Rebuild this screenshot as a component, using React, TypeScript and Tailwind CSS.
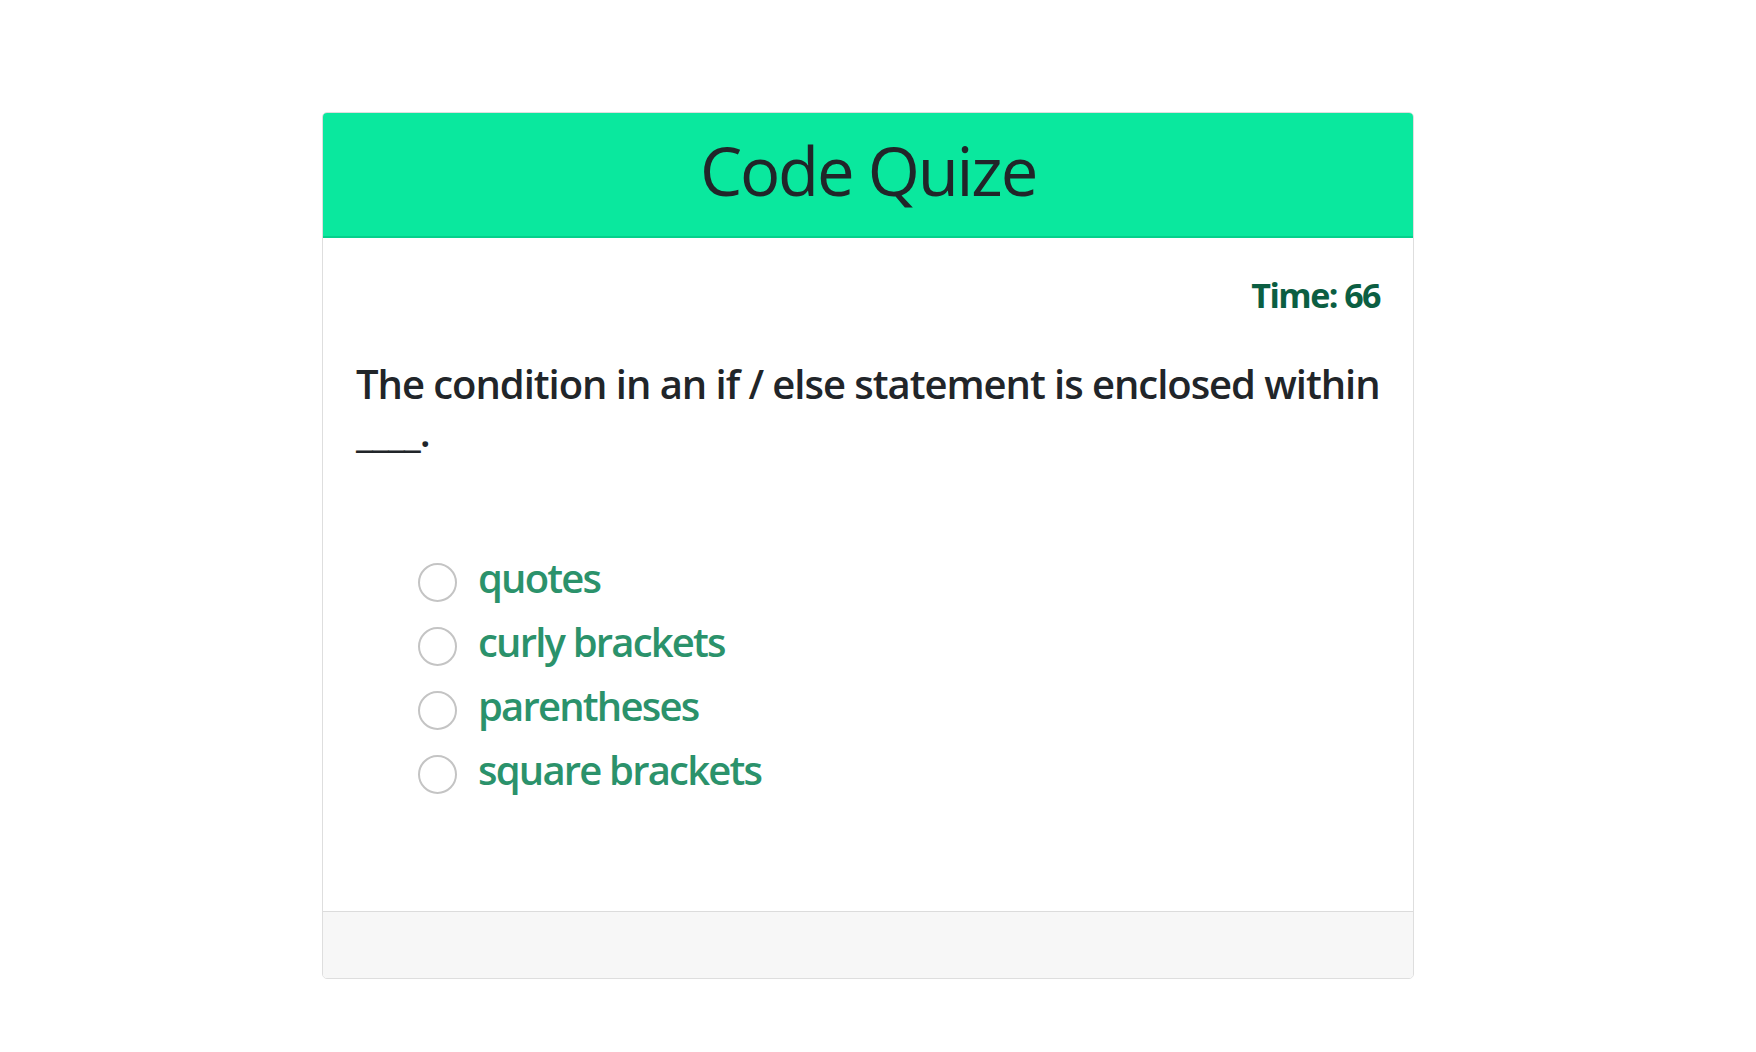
import { useState } from 'react';

const choices = ['quotes', 'curly brackets', 'parentheses', 'square brackets'];

export default function App() {
  const [picked, setPicked] = useState<string | null>(null);

  return (
    <div className="min-h-screen bg-white pt-[112px] font-['Open_Sans',sans-serif]">
      <div className="ml-[322px] w-[1092px] rounded-[5px] border border-[#dedede] overflow-hidden">
        <div className="h-[125px] flex items-center justify-center bg-[#0ae89e] border-b-2 border-[#05d08c]">
          <h1 className="text-[67px] leading-none font-medium text-[#212529] tracking-[-0.032em] pb-[8px]">
            Code Quize
          </h1>
        </div>

        <div className="pl-[33px] pr-[33px] pt-[36px] pb-[105px] bg-white">
          <div className="text-right text-[34px] leading-[42px] font-bold text-[#0b5e42] tracking-[-0.045em]">
            Time: 66
          </div>
          <h2 className="mt-[44px] text-[40px] leading-[48px] font-semibold text-[#212529] tracking-[-0.026em] whitespace-nowrap">
            The condition in an if / else statement is enclosed within
            <br />
            ____.
          </h2>

          <ul className="mt-[94px] pl-[62px] flex flex-col">
            {choices.map((c) => (
              <li key={c} className="h-[64px] flex items-center">
                <button
                  onClick={() => setPicked(c)}
                  className="flex items-center gap-[21px] cursor-pointer"
                >
                  <span
                    className={
                      'w-[39px] h-[39px] rounded-full border-2 shrink-0 ' +
                      (picked === c ? 'border-[#2b926b] bg-[#2b926b]' : 'border-[#c4c4c4] bg-white')
                    }
                  />
                  <span className="text-[40px] leading-[48px] font-semibold text-[#2b926b] tracking-[-0.045em] -mt-[8px]">
                    {c}
                  </span>
                </button>
              </li>
            ))}
          </ul>
        </div>

        <div className="h-[67px] bg-[#f7f7f7] border-t border-[#dcdcdc]" />
      </div>
    </div>
  );
}
